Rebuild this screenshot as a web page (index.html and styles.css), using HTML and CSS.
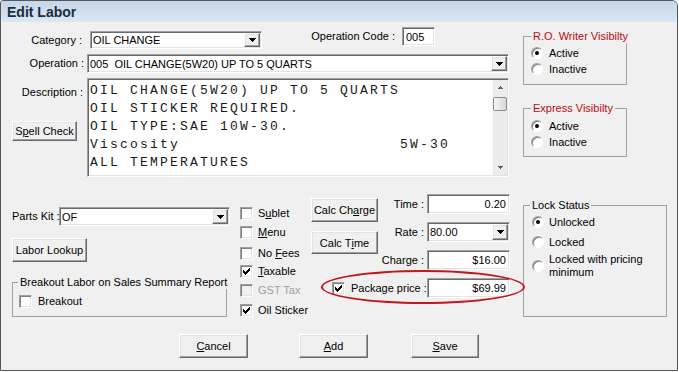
FILE: index.html
```html
<!DOCTYPE html>
<html>
<head>
<meta charset="utf-8">
<title>Edit Labor</title>
<link rel="stylesheet" href="styles.css">
</head>
<body>
<div class="window">
  <div class="titlebar"><span class="title">Edit Labor</span></div>
  <div class="content">
    <div class="top">
      <div class="top-left">
        <div class="r1">
          <span class="lbl lbl-cat">Category :</span>
          <div class="combo sunken combo-cat">
            <span class="val">OIL CHANGE</span>
            <span class="dd raised"><svg width="7" height="4" viewBox="0 0 7 4" shape-rendering="crispEdges"><path d="M0 0h7v1H0zM1 1h5v1H1zM2 2h3v1H2zM3 3h1v1H3z"/></svg></span>
          </div>
          <span class="lbl lbl-code">Operation Code :</span>
          <div class="input sunken input-code">005</div>
        </div>
        <div class="r2">
          <span class="lbl lbl-op">Operation :</span>
          <div class="combo sunken combo-op">
            <span class="val">005  OIL CHANGE(5W20) UP TO 5 QUARTS</span>
            <span class="dd raised"><svg width="7" height="4" viewBox="0 0 7 4" shape-rendering="crispEdges"><path d="M0 0h7v1H0zM1 1h5v1H1zM2 2h3v1H2zM3 3h1v1H3z"/></svg></span>
          </div>
        </div>
        <div class="r3">
          <div class="desc-side">
            <div class="lbl lbl-desc">Description :</div>
            <button class="btn btn-spell">S<u>p</u>ell Check</button>
          </div>
          <div class="textarea sunken">
<pre class="desc-text">OIL CHANGE(5W20) UP TO 5 QUARTS
OIL STICKER REQUIRED.
OIL TYPE:SAE 10W-30.
Viscosity                      5W-30
ALL TEMPERATURES</pre>
            <div class="vscroll">
              <div class="sb-arrow"><svg width="5" height="3" viewBox="0 0 5 3" shape-rendering="crispEdges"><path d="M2 0h1v1H2zM1 1h3v1H1zM0 2h5v1H0z"/></svg></div>
              <div class="sb-thumb"></div>
              <div class="sb-track"></div>
              <div class="sb-arrow"><svg width="5" height="3" viewBox="0 0 5 3" shape-rendering="crispEdges"><path d="M0 0h5v1H0zM1 1h3v1H1zM2 2h1v1H2z"/></svg></div>
            </div>
          </div>
        </div>
      </div>
      <div class="top-right">
        <fieldset class="group group-ro">
          <legend class="red">R.O. Writer Visibilty</legend>
          <div class="opt"><span class="radio on"></span><span>Active</span></div>
          <div class="opt"><span class="radio"></span><span>Inactive</span></div>
        </fieldset>
        <fieldset class="group group-ex">
          <legend class="red">Express Visibilty</legend>
          <div class="opt"><span class="radio on"></span><span>Active</span></div>
          <div class="opt"><span class="radio"></span><span>Inactive</span></div>
        </fieldset>
      </div>
    </div>

    <div class="lower">
      <div class="lower-left">
        <div class="pk-row">
          <span class="lbl lbl-pk">Parts Kit :</span>
          <div class="combo sunken combo-pk">
            <span class="val">OF</span>
            <span class="dd raised"><svg width="7" height="4" viewBox="0 0 7 4" shape-rendering="crispEdges"><path d="M0 0h7v1H0zM1 1h5v1H1zM2 2h3v1H2zM3 3h1v1H3z"/></svg></span>
          </div>
        </div>
        <button class="btn btn-lookup">Labor Lookup</button>
        <fieldset class="group group-bo">
          <legend>Breakout Labor on Sales Summary Report</legend>
          <div class="chk-row"><span class="cb"></span><span>Breakout</span></div>
        </fieldset>
      </div>

      <div class="checks">
        <div class="chk-row"><span class="cb"></span><span>S<u>u</u>blet</span></div>
        <div class="chk-row"><span class="cb"></span><span><u>M</u>enu</span></div>
        <div class="chk-row"><span class="cb"></span><span>No <u>F</u>ees</span></div>
        <div class="chk-row"><span class="cb"><svg width="7" height="7" viewBox="0 0 7 7" shape-rendering="crispEdges"><path d="M6 0h1v1H6zM5 1h2v1H5zM0 2h1v1H0zM4 2h3v1H4zM0 3h2v1H0zM3 3h3v1H3zM0 4h5v1H0zM1 5h3v1H1zM2 6h1v1H2z"/></svg></span><span><u>T</u>axable</span></div>
        <div class="chk-row disabled"><span class="cb"></span><span>GST Tax</span></div>
        <div class="chk-row"><span class="cb"><svg width="7" height="7" viewBox="0 0 7 7" shape-rendering="crispEdges"><path d="M6 0h1v1H6zM5 1h2v1H5zM0 2h1v1H0zM4 2h3v1H4zM0 3h2v1H0zM3 3h3v1H3zM0 4h5v1H0zM1 5h3v1H1zM2 6h1v1H2z"/></svg></span><span>Oil Sticker</span></div>
      </div>

      <div class="calc-area">
        <div class="calc-btns">
          <button class="btn btn-charge">Calc Ch<u>a</u>rge</button>
          <button class="btn btn-time">Calc T<u>i</u>me</button>
        </div>
        <span class="flbl r-time">Time :</span>
        <div class="input sunken num r-time">0.20</div>
        <span class="flbl r-rate">Rate :</span>
        <div class="combo sunken r-rate">
          <span class="val">80.00</span>
          <span class="dd raised"><svg width="7" height="4" viewBox="0 0 7 4" shape-rendering="crispEdges"><path d="M0 0h7v1H0zM1 1h5v1H1zM2 2h3v1H2zM3 3h1v1H3z"/></svg></span>
        </div>
        <span class="flbl r-charge">Charge :</span>
        <div class="input sunken num r-charge">$16.00</div>
        <div class="pkg-row">
          <span class="cb"><svg width="7" height="7" viewBox="0 0 7 7" shape-rendering="crispEdges"><path d="M6 0h1v1H6zM5 1h2v1H5zM0 2h1v1H0zM4 2h3v1H4zM0 3h2v1H0zM3 3h3v1H3zM0 4h5v1H0zM1 5h3v1H1zM2 6h1v1H2z"/></svg></span>
          <span class="pkg-lbl">Package price :</span>
        </div>
        <div class="input sunken num r-pkg">$69.99</div>
      </div>

      <fieldset class="group group-lock">
        <legend>Lock Status</legend>
        <div class="lopt"><span class="radio on"></span><span>Unlocked</span></div>
        <div class="lopt"><span class="radio"></span><span>Locked</span></div>
        <div class="lopt lopt3"><span class="radio"></span><span>Locked with pricing<br>minimum</span></div>
      </fieldset>

      <div class="highlight"></div>
    </div>

    <div class="actions">
      <button class="btn btn-cancel"><u>C</u>ancel</button>
      <button class="btn btn-add"><u>A</u>dd</button>
      <button class="btn btn-save"><u>S</u>ave</button>
    </div>
  </div>
</div>
</body>
</html>
```

FILE: styles.css
```css
* { box-sizing: border-box; }
html, body { margin: 0; padding: 0; background: #ffffff; }
body {
  font-family: "Liberation Sans", Arial, sans-serif;
  font-size: 11px;
  color: #000;
}

.window {
  width: 678px;
  height: 371px;
  border: 1px solid #575757;
  border-radius: 3px 6px 0 0;
  background: #f0f0f0;
  overflow: hidden;
  display: flex;
  flex-direction: column;
}
.titlebar {
  height: 21px;
  flex: none;
  background: linear-gradient(#c5d7ea, #d3e1ef 65%, #dce7f2);
  display: flex;
  align-items: center;
  padding-left: 6px;
}
.title {
  font-weight: bold;
  font-size: 14px;
  line-height: 16px;
  color: #1d2c3b;
}
.content { flex: 1; }

/* 3D borders */
.sunken {
  border: 1px solid;
  border-color: #a0a0a0 #ffffff #ffffff #a0a0a0;
  box-shadow: inset 1px 1px 0 #696969, inset -1px -1px 0 #e3e3e3;
}
.raised {
  border: 1px solid;
  border-color: #ffffff #696969 #696969 #ffffff;
  box-shadow: inset -1px -1px 0 #a0a0a0, inset 1px 1px 0 #e3e3e3;
  background: #f0f0f0;
}

.lbl { line-height: 13px; white-space: nowrap; }

.combo {
  display: flex;
  background: #fff;
  padding: 1px;
}
.combo .val {
  flex: 1;
  display: flex;
  align-items: center;
  padding-left: 1px;
  white-space: pre;
  overflow: hidden;
}
.combo .dd {
  width: 16px;
  flex: none;
  display: flex;
  align-items: center;
  justify-content: center;
}
.combo .dd svg { fill: #000; }

.input {
  background: #fff;
  display: flex;
  align-items: center;
  padding: 0 3px;
  white-space: nowrap;
}
.input.num { justify-content: flex-end; }

.btn {
  font-family: "Liberation Sans", Arial, sans-serif;
  font-size: 11px;
  color: #000;
  background: #f0f0f0;
  border: 1px solid;
  border-color: #ffffff #696969 #696969 #ffffff;
  box-shadow: inset -1px -1px 0 #a0a0a0, inset 1px 1px 0 #e3e3e3;
  padding: 0;
  margin: 0;
  display: flex;
  align-items: center;
  justify-content: center;
  white-space: nowrap;
}

/* top section */
.top { height: 168px; display: flex; flex: none; }
.top-left { width: 508px; padding-top: 5px; flex: none; }
.r1 { height: 27px; display: flex; align-items: flex-start; }
.lbl-cat { width: 86px; text-align: right; padding-right: 5px; margin-top: 7px; }
.combo-cat { width: 172px; height: 18px; margin-left: 3px; margin-top: 4px; }
.lbl-code { width: 140px; text-align: right; padding-right: 7px; margin-top: 3px; }
.input-code { width: 33px; height: 19px; padding-left: 3px; }

.r2 { height: 24px; display: flex; align-items: flex-start; }
.lbl-op { width: 86px; text-align: right; padding-right: 3px; margin-top: 3px; }
.combo-op { width: 422px; height: 19px; }

.r3 { display: flex; align-items: flex-start; }
.desc-side { width: 86px; flex: none; }
.lbl-desc { text-align: right; padding-right: 4px; margin-top: 8px; }
.btn-spell { width: 65px; height: 20px; margin-left: 11px; margin-top: 22px; }

.textarea {
  width: 422px;
  height: 99px;
  background: #fff;
  padding: 1px;
  display: flex;
}
.desc-text {
  flex: 1;
  margin: 0;
  padding: 2px 0 0 1px;
  font-family: "Liberation Mono", "Courier New", monospace;
  font-size: 13px;
  letter-spacing: 2.2px;
  line-height: 18px;
  color: #1a1a1a;
  overflow: hidden;
}
.vscroll {
  width: 15px;
  flex: none;
  background: #ececec;
  border-left: 1px solid #f7f7f7;
  display: flex;
  flex-direction: column;
}
.sb-arrow {
  height: 15px;
  display: flex;
  align-items: center;
  justify-content: center;
  flex: none;
}
.sb-arrow svg { fill: #606060; }
.sb-thumb {
  height: 14px;
  margin: 2px 0 0 0;
  border: 1px solid #8e8f8f;
  border-radius: 2px;
  background: linear-gradient(to right, #f6f6f6, #e6e6e6 55%, #d8d8d8);
  flex: none;
}
.sb-track { flex: 1; }

.top-right { margin-left: 14px; width: 104px; flex: none; }

.group {
  margin: 0;
  border: 1px solid #a0a0a0;
  min-width: 0;
}
.group legend {
  padding: 0 2px;
  line-height: 13px;
  font-size: 11px;
  white-space: nowrap;
}
.group legend.red { color: #bf0a10; }

.group-ro { width: 104px; margin-top: 8px; padding: 2px 0 7px 7px; }
.group-ro legend { margin-left: 0; }
.group-ex { width: 104px; margin-top: 17px; padding: 3px 0 6px 7px; }
.group-ex legend { margin-left: 0; }

.opt { height: 16px; display: flex; align-items: center; gap: 6px; }

.radio {
  width: 12px;
  height: 12px;
  border-radius: 50%;
  background: #fff;
  border: 1px solid;
  border-color: #a0a0a0 #ffffff #ffffff #a0a0a0;
  box-shadow: inset 1px 1px 0 #808080;
  position: relative;
  flex: none;
}
.radio.on::after {
  content: "";
  position: absolute;
  left: 3px;
  top: 3px;
  width: 4px;
  height: 4px;
  border-radius: 50%;
  background: #000;
}

.cb {
  width: 13px;
  height: 13px;
  background: #fff;
  border: 1px solid;
  border-color: #a0a0a0 #ffffff #ffffff #a0a0a0;
  box-shadow: inset 1px 1px 0 #808080, inset -1px -1px 0 #e3e3e3;
  display: flex;
  align-items: center;
  justify-content: center;
  flex: none;
}
.cb svg { fill: #000; }

/* lower section */
.lower {
  height: 130px;
  display: flex;
  align-items: flex-start;
  position: relative;
  flex: none;
}
.lower-left { width: 229px; padding-left: 11px; padding-top: 17px; flex: none; }
.pk-row { height: 19px; display: flex; }
.lbl-pk { width: 47px; line-height: 19px; }
.combo-pk { width: 171px; height: 19px; }
.btn-lookup { width: 75px; height: 24px; margin-top: 12px; }
.group-bo { width: 215px; margin-top: 14px; padding: 4px 0 7px 6px; }
.group-bo legend { margin-left: -1px; }

.chk-row { display: flex; align-items: flex-start; gap: 5px; line-height: 13px; white-space: nowrap; }
.group-bo .chk-row { height: 16px; align-items: center; gap: 6px; }
.chk-row.disabled { color: #a0a0a0; }
.chk-row.disabled .cb { background: #f0f0f0; }

.checks { width: 71px; margin-left: 10px; padding-top: 17px; flex: none; }
.checks .chk-row { height: 19px; }
.checks .chk-row:nth-child(2) { height: 21px; }
.checks .chk-row:nth-child(3) { height: 18px; }
.checks .chk-row:nth-child(5) { height: 20px; }

.calc-area {
  width: 199px;
  flex: none;
  padding-top: 4px;
  display: grid;
  grid-template-columns: 67px 49px 83px;
  grid-template-rows: 20px 20px 20px 20px;
  row-gap: 8px;
}
.calc-btns {
  grid-column: 1;
  grid-row: 1 / 4;
  padding-top: 4px;
  display: flex;
  flex-direction: column;
  gap: 9px;
}
.btn-charge { width: 67px; height: 24px; }
.btn-time { width: 67px; height: 23px; }
.flbl {
  grid-column: 2;
  text-align: right;
  padding-right: 3px;
  line-height: 20px;
  white-space: nowrap;
}
.calc-area .input, .calc-area .combo { grid-column: 3; height: 20px; }
.r-time { grid-row: 1; }
.r-rate { grid-row: 2; }
.r-charge { grid-row: 3; }
.r-pkg { grid-row: 4; }
.pkg-row {
  grid-column: 1 / 3;
  grid-row: 4;
  display: flex;
  align-items: center;
  padding-left: 21px;
}
.pkg-lbl { margin-left: 6px; white-space: nowrap; }

.group-lock { width: 144px; margin-left: 13px; margin-top: 9px; padding: 0 0 37px 8px; }
.group-lock legend { margin-left: -2px; }
.lopt { height: 20px; display: flex; align-items: center; gap: 5px; line-height: 13px; }
.lopt3 { height: 26px; margin-top: 1px; }

.highlight {
  position: absolute;
  left: 320px;
  top: 80px;
  width: 204px;
  height: 34px;
  border: 2px solid #c4161c;
  border-radius: 50%;
}

.actions { display: flex; margin-top: 14px; }
.btn-cancel { width: 69px; height: 24px; margin-left: 178px; }
.btn-add { width: 69px; height: 24px; margin-left: 51px; }
.btn-save { width: 68px; height: 24px; margin-left: 43px; }
```
